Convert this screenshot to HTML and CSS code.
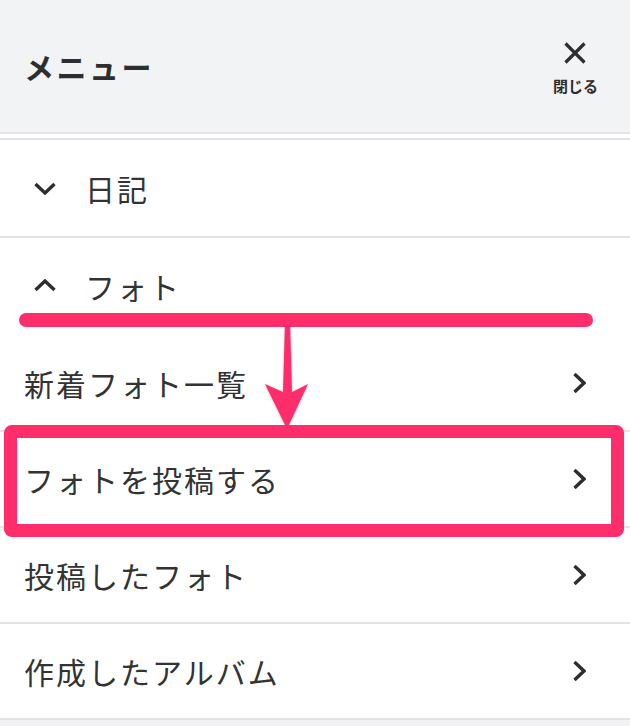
FILE: index.html
```html
<!DOCTYPE html>
<html lang="ja">
<head>
<meta charset="utf-8">
<title>メニュー</title>
<link rel="stylesheet" href="styles.css">
</head>
<body>
<div class="page">
  <header class="menu-header">
    <h1 class="menu-title">メニュー</h1>
    <button class="close-btn" type="button">
      <svg class="close-icon" viewBox="0 0 24 24" width="24" height="24"><path d="M2.5 2.5 L21.5 21.5 M21.5 2.5 L2.5 21.5" /></svg>
      <span class="close-label">閉じる</span>
    </button>
  </header>
  <div class="header-gap"></div>
  <ul class="menu">
    <li class="section">
      <div class="section-head">
        <svg class="toggle" viewBox="0 0 24 13" width="24" height="13"><polyline points="2.5,2 12,11 21.5,2" /></svg>
        <span class="section-label">日記</span>
      </div>
    </li>
    <li class="section open">
      <div class="section-head">
        <svg class="toggle" viewBox="0 0 24 13" width="24" height="13"><polyline points="2.5,11 12,2 21.5,11" /></svg>
        <span class="section-label">フォト</span>
      </div>
      <ul class="sub">
        <li class="sub-item"><span>新着フォト一覧</span><svg class="go" viewBox="0 0 14 22" width="14" height="22"><polyline points="2.5,2 12,11 2.5,20" /></svg></li>
        <li class="sub-item"><span>フォトを投稿する</span><svg class="go" viewBox="0 0 14 22" width="14" height="22"><polyline points="2.5,2 12,11 2.5,20" /></svg></li>
        <li class="sub-item"><span>投稿したフォト</span><svg class="go" viewBox="0 0 14 22" width="14" height="22"><polyline points="2.5,2 12,11 2.5,20" /></svg></li>
        <li class="sub-item"><span>作成したアルバム</span><svg class="go" viewBox="0 0 14 22" width="14" height="22"><polyline points="2.5,2 12,11 2.5,20" /></svg></li>
      </ul>
    </li>
  </ul>

  <div class="annot-bar"></div>
  <svg class="annot-arrow" viewBox="0 0 52 115" width="52" height="115"><polygon points="25,3 30,3 32,74 48,66 27,111 5,66 23,74" /></svg>
  <div class="annot-box"></div>
</div>
</body>
</html>
```

FILE: styles.css
```css
* { box-sizing: border-box; }

html, body {
  margin: 0;
  padding: 0;
}

body {
  background: #f2f2f4;
  font-family: "Noto Sans CJK JP", "Noto Sans", sans-serif;
  color: #333333;
}

.page {
  position: relative;
  width: 630px;
  min-height: 726px;
  background: #f2f2f4;
}

.menu-header {
  height: 134px;
  background: #f2f3f5;
  border-bottom: 2px solid #e3e3e8;
  display: flex;
  align-items: center;
  justify-content: space-between;
  padding: 0 32px 0 24px;
}

.menu-title {
  margin: 0;
  font-size: 30px;
  font-weight: 700;
  letter-spacing: 2.5px;
  line-height: 1;
  color: #2e2e2e;
}

.close-btn {
  display: flex;
  flex-direction: column;
  align-items: center;
  gap: 13px;
  border: 0;
  background: transparent;
  padding: 0;
  margin-top: 2px;
  font-family: inherit;
  color: #2e2e2e;
}

.close-icon {
  display: block;
  fill: none;
  stroke: #2e2e2e;
  stroke-width: 3.2;
  stroke-linecap: butt;
}

.close-label {
  font-size: 15px;
  font-weight: 700;
  line-height: 16px;
}

.header-gap {
  height: 6px;
  background: #ffffff;
  border-bottom: 2px solid #e3e3e8;
}

.menu,
.sub {
  list-style: none;
  margin: 0;
  padding: 0;
  background: #ffffff;
}

.section {
  border-bottom: 2px solid #e3e3e8;
}

.section.open {
  border-bottom: 0;
}

.section-head {
  height: 96px;
  display: flex;
  align-items: center;
  padding-left: 33px;
  gap: 28px;
}

.section.open .section-head {
  height: 98px;
  padding-bottom: 3px;
}

.toggle {
  display: block;
  fill: none;
  stroke: #2e2e2e;
  stroke-width: 3.4;
}

.section-label,
.sub-item span {
  font-size: 30px;
  letter-spacing: 2px;
  line-height: 1;
  color: #333333;
}

.sub-item {
  height: 96px;
  border-bottom: 2px solid #e3e3e8;
  display: flex;
  align-items: center;
  justify-content: space-between;
  padding: 0 44px 0 24px;
}

.go {
  display: block;
  fill: none;
  stroke: #2e2e2e;
  stroke-width: 3.4;
}

/* annotation overlays */
.annot-bar {
  position: absolute;
  left: 19px;
  top: 313px;
  width: 574px;
  height: 14px;
  border-radius: 7px;
  background: #ff2d6c;
}

.annot-box {
  position: absolute;
  left: 4px;
  top: 425px;
  width: 620px;
  height: 112px;
  border: 13px solid #ff2d6c;
  border-radius: 8px;
}

.annot-arrow {
  position: absolute;
  left: 260px;
  top: 318px;
  fill: #ff2d6c;
  filter: drop-shadow(0 1px 1px rgba(0, 0, 0, 0.25));
}
```
